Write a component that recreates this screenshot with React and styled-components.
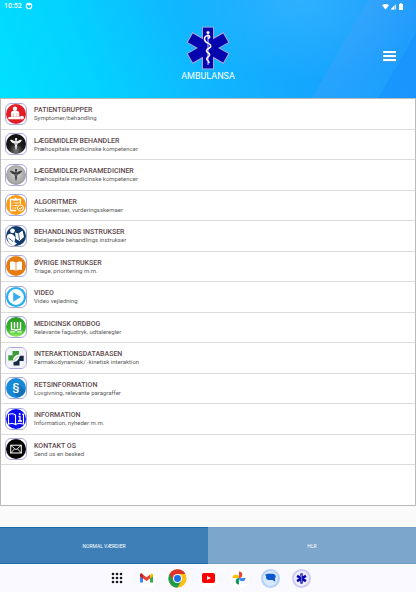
import React from 'react'
import styled, { createGlobalStyle } from 'styled-components'

const GlobalStyle = createGlobalStyle`
  * {
    box-sizing: border-box;
  }
  body {
    margin: 0;
    background: #fafafa;
    font-family: Roboto, "Liberation Sans", sans-serif;
  }
`

const Page = styled.div`
  display: flex;
  flex-direction: column;
  min-height: 100vh;
`

const Header = styled.header`
  display: flex;
  flex-direction: column;
  padding-bottom: 16px;
  background:
    linear-gradient(120deg, transparent 78%, rgba(80, 160, 250, 0.3) 78%, rgba(60, 160, 255, 0.1) 92%, rgba(24, 130, 255, 0.3) 92%),
    radial-gradient(ellipse 120px 80px at 72% 0, rgba(70, 190, 255, 0.5), transparent),
    linear-gradient(68deg, #00e0ff 0%, #04d0ff 24%, #10b6ff 47%, #14a8ff 65%, #1e9afc 100%);
`

const StatusBar = styled.div`
  display: flex;
  align-items: center;
  gap: 3px;
  height: 12px;
  padding: 0 12px 0 4px;
  color: #fff;
  font-size: 7px;
  font-weight: 500;
  line-height: 8px;
`

const StatusIcons = styled.span`
  display: flex;
  gap: 1px;
  margin-left: auto;
`

const TitleBar = styled.div`
  display: grid;
  grid-template-columns: 1fr auto 1fr;
  align-items: center;
  padding: 14px 20px 0;
`

const Brand = styled.h1`
  display: flex;
  flex-direction: column;
  align-items: center;
  grid-column: 2;
  margin: 0;
  color: #fff;
  font-size: 9px;
  font-weight: 400;
  line-height: 12px;
`

const MenuBtn = styled.button`
  display: flex;
  justify-self: end;
  padding: 4px 0 0;
  border: 0;
  background: none;
  cursor: pointer;
`

const Panel = styled.ul`
  display: grid;
  flex: 1;
  grid-template-rows: repeat(12, 1fr) 40px;
  margin: 0 0 21px;
  padding: 0;
  border: 1px solid #bbb;
  background: #fff;
  list-style: none;
`

const Item = styled.li`
  display: flex;
  border-bottom: 1px solid #dcdcdc;
`

const ItemLink = styled.a`
  display: flex;
  flex: 1;
  align-items: center;
  gap: 7px;
  padding: 0 4px;
  color: #5d4a4c;
  text-decoration: none;
`

const ItemBody = styled.span`
  display: flex;
  flex-direction: column;
  padding-top: 1px;
`

const ItemTitle = styled.span`
  font-size: 7px;
  font-weight: 500;
  line-height: 7px;
`

const ItemText = styled.span`
  color: #5c5c5c;
  font-size: 6px;
  line-height: 7px;
`

const Tabs = styled.div`
  display: flex;
`

const Tab = styled.button`
  flex: 1;
  height: 37px;
  padding: 0;
  border: 0;
  border-top: 1px solid ${props => props.$edge};
  border-bottom: 1px solid ${props => props.$edge};
  background: ${props => props.$color};
  color: #fff;
  font-family: inherit;
  font-size: 5px;
  line-height: 6px;
  cursor: pointer;
`

const Dock = styled.nav`
  display: flex;
  align-items: center;
  justify-content: center;
  gap: 12px;
  height: 28px;
  padding-left: 4px;
  background: #faf9ff;
`

const DockBtn = styled.button`
  display: flex;
  align-items: center;
  justify-content: center;
  width: ${props => props.$width || '19px'};
  height: 19px;
  padding: 0;
  border: ${props => (props.$ring ? `2px solid ${props.$ring}` : '0')};
  border-radius: 50%;
  background: ${props => props.$fill || 'transparent'};
  cursor: pointer;
`

const StarOfLife = ({ size, outline }) => (
  <svg width={size} height={size} viewBox="-22 -22 44 44" aria-hidden="true">
    {outline && [0, 60, 120].map(a => (
      <rect key={a} x="-5.2" y="-20.6" width="10.4" height="41.2" transform={`rotate(${a})`} fill="none" stroke="#a7a6dc" strokeWidth="1.6" />
    ))}
    {[0, 60, 120].map(a => (
      <rect key={a} x="-5" y="-20.4" width="10" height="40.8" transform={`rotate(${a})`} fill="#0505ae" />
    ))}
    <path d="M0 -15V17" stroke="#c9cbee" strokeWidth="1" />
    <circle cx="0" cy="-15.500" r="1.500" fill="#fff" />
    <path d="M-2.500 -6.500C-4.500 -9 -3.500 -12.500 0 -12.500C2.500 -12.300 2 -10.500 0.500 -9.800M-2.500 -6.500C-1 -4.500 2.500 -5 2.800 -2C3 0.500 -1.500 0 -1.500 2.800C-1.500 5 1.800 4.500 1.600 7C1.300 9 -1.300 8.800 -1.300 11C-1.300 12.500 0.500 12.500 1 14.500" fill="none" stroke="#fff" strokeWidth="1.500" strokeLinecap="round" />
  </svg>
)

const Disc = ({ color }) => <circle cx="11" cy="11" r="10" fill={color} />

const caduceus = color => (
  <g fill="none" stroke={color} strokeLinecap="round">
    <path d="M11 6V16" strokeWidth="1.2" />
    <path d="M10.500 8.500C8.500 8.500 8 7 5.500 7C6 9 8 10.500 10.500 10M11.500 8.500C13.500 8.500 14 7 16.500 7C16 9 14 10.500 11.500 10" fill={color} strokeWidth="0.6" />
    <path d="M9.500 10.500C8.500 12 13 12.500 12 14M12.500 10.500C13.500 12 9 12.500 10 14" strokeWidth="0.8" />
    <circle cx="11" cy="6" r="0.6" fill={color} />
  </g>
)

const drawings = {
  patient: (
    <>
      <Disc color="#e11c24" />
      <circle cx="10" cy="5.800" r="2.200" fill="#fff" />
      <path d="M6 13.500V10.200C6 8.500 7 8 8.200 8H12C13.500 8 14.200 8.700 14.200 10.200V13.500Z" fill="#fff" />
      <path d="M2.500 15C5 13.500 8 13.300 15.500 13.600V16.200H4Z" fill="#fff" />
      <circle cx="17" cy="14.600" r="1.900" fill="#fff" />
      <path d="M8.300 10.500V13M11.900 10.500V13" stroke="#e98a8d" strokeWidth="0.6" />
    </>
  ),
  doctor: (
    <>
      <Disc color="url(#black)" />
      {caduceus('#fff')}
    </>
  ),
  medic: (
    <>
      <Disc color="url(#silver)" />
      {caduceus('#333')}
    </>
  ),
  algorithm: (
    <>
      <Disc color="#fb9a13" />
      <path d="M8 5.500H5.500V16.500H11M13 5.500H15.300V10" fill="none" stroke="#fff" strokeWidth="1.300" />
      <path d="M8 6.800V4.800H9.300A1.200 1.200 0 0 1 11.700 4.800H13V6.800Z" fill="#fff" />
      <path d="M7.500 9H8.500M9.500 9H13.500M7.500 11.500H8.500M9.500 11.500H12.500M7.500 14H8.500M9.500 14H11.500" stroke="#fff" />
      <circle cx="15.500" cy="14" r="3" fill="#fb9a13" stroke="#fff" />
      <path d="M14 14L15.200 15.200L17 13" fill="none" stroke="#fff" />
    </>
  ),
  instructions: (
    <>
      <Disc color="#113a6c" />
      <circle cx="7.500" cy="5.800" r="2.400" fill="#fff" />
      <path d="M2 11C3 8.500 6 8.300 8 9.700L10.500 12.500L9.500 17L12 18.500L9 20.500C5 20 2 16 2 11Z" fill="#fff" />
      <path d="M10 7.500L13.500 8.500L17.500 5.500L19 12L14.500 16L11 14Z" fill="#fff" />
      <path d="M13.500 8.500L14.500 15M3.500 13L8 16.500" stroke="#113a6c" strokeWidth="0.800" />
    </>
  ),
  book: (
    <>
      <Disc color="#e57c12" />
      <path d="M10.600 7.500C9 6.200 7 6.200 5 6.800V15.200C7 14.600 9 14.700 10.600 15.800ZM11.400 7.500C13 6.200 15 6.200 17 6.800V15.200C15 14.600 13 14.700 11.400 15.800Z" fill="#fff" />
    </>
  ),
  video: (
    <>
      <circle cx="11" cy="11" r="9" fill="#fff" stroke="#25aff5" strokeWidth="2.200" />
      <path d="M8.200 6.200L16 11L8.200 15.800Z" fill="#35adee" />
    </>
  ),
  dictionary: (
    <>
      <Disc color="url(#green)" />
      <path d="M6.500 6V13.500H9.800L11 14.500L12.200 13.500H15.500V6M9.500 6V12M12.500 6V12" fill="none" stroke="#fff" strokeWidth="1.400" />
      <path d="M5.500 15.800H9.800M12.200 15.800H16.500" stroke="#e5ffd9" strokeWidth="1.200" />
    </>
  ),
  interaction: (
    <>
      <rect x="1" y="1" width="20" height="20" rx="5" fill="#f2f3f7" />
      <path d="M7.500 4H14V7.500C10.500 7.500 8.500 9.500 7.800 13.500H3.300V8.300H7.500Z" fill="#3c9c3a" />
      <path d="M14.500 18.500H8.500V15C12 15 14 12.500 14.700 8.800H18.700V14H14.500Z" fill="#152b42" />
      <path d="M8 14.500C8.300 10.500 10.500 8 14.500 8C14 12 12 14.500 8 14.500Z" fill="#fff" />
      <path d="M8.500 14L13.500 9" stroke="#7dbb70" strokeWidth="0.800" />
    </>
  ),
  law: (
    <>
      <Disc color="#1689d8" />
      <path d="M12 6L20.500 13.500A10 10 0 0 1 12 20.500L8.500 15.500Z" fill="#1273bb" />
      <text x="11" y="14" textAnchor="middle" fill="#fff" fontSize="11" fontWeight="500">§</text>
    </>
  ),
  info: (
    <>
      <Disc color="#0b0bf4" />
      <path d="M10.500 7C8.500 5.500 6 5.500 3.500 6.200V16C6 15.300 8.500 15.300 10.500 16.500V7M10.500 16.500C12.500 15.300 15.500 15.300 18.500 16V6.200H17" fill="none" stroke="#fff" strokeWidth="1.100" />
      <path d="M13.500 8.500H15V13M13 13H17" fill="none" stroke="#fff" strokeWidth="1.300" />
      <circle cx="14.700" cy="6" r="1" fill="#fff" />
    </>
  ),
  mail: (
    <>
      <Disc color="#050505" />
      <rect x="5.700" y="7.200" width="10.600" height="7.800" fill="none" stroke="#fff" />
      <path d="M6 7.500L11 11.800L16 7.500M6 14.800L9.500 10.800M16 14.800L12.500 10.800" fill="none" stroke="#fff" strokeWidth="0.900" />
    </>
  ),
}

const RowIcon = ({ name }) => (
  <svg width="22" height="22" viewBox="0 0 22 22" aria-hidden="true">
    <defs>
      <radialGradient id="black" cx="50%" cy="85%" r="75%">
        <stop offset="0" stopColor="#777" />
        <stop offset="0.5" stopColor="#1c1c1c" />
        <stop offset="1" stopColor="#111" />
      </radialGradient>
      <radialGradient id="silver" cx="50%" cy="45%" r="60%">
        <stop offset="0" stopColor="#d8d8d8" />
        <stop offset="1" stopColor="#949494" />
      </radialGradient>
      <linearGradient id="green" x1="0" y1="0" x2="0" y2="1">
        <stop offset="0" stopColor="#2e9a2b" />
        <stop offset="0.6" stopColor="#35b52a" />
        <stop offset="1" stopColor="#9af06a" />
      </linearGradient>
    </defs>
    <rect x="0.500" y="0.500" width="21" height="21" rx="5.500" fill="#fff" stroke="#a9a8dd" />
    {drawings[name]}
  </svg>
)

const items = [
  { icon: 'patient', title: 'PATIENTGRUPPER', text: 'Symptomer/behandling' },
  { icon: 'doctor', title: 'LÆGEMIDLER BEHANDLER', text: 'Præhospitale medicinske kompetencer' },
  { icon: 'medic', title: 'LÆGEMIDLER PARAMEDICINER', text: 'Præhospitale medicinske kompetencer' },
  { icon: 'algorithm', title: 'ALGORITMER', text: 'Huskeremser, vurderingsskemaer' },
  { icon: 'instructions', title: 'BEHANDLINGS INSTRUKSER', text: 'Detaljerede behandlings instrukser' },
  { icon: 'book', title: 'ØVRIGE INSTRUKSER', text: 'Triage, prioritering m.m.' },
  { icon: 'video', title: 'VIDEO', text: 'Video vejledning' },
  { icon: 'dictionary', title: 'MEDICINSK ORDBOG', text: 'Relevante fagudtryk, udtaleregler' },
  { icon: 'interaction', title: 'INTERAKTIONSDATABASEN', text: 'Farmakodynamisk/ -kinetisk interaktion' },
  { icon: 'law', title: 'RETSINFORMATION', text: 'Lovgivning, relevante paragraffer' },
  { icon: 'info', title: 'INFORMATION', text: 'Information, nyheder m.m.' },
  { icon: 'mail', title: 'KONTAKT OS', text: 'Send os en besked' },
]

const Status = () => (
  <StatusBar>
    <span>10:52</span>
    <svg width="8" height="8" viewBox="0 0 8 8" aria-hidden="true">
      <circle cx="4" cy="4" r="2.700" fill="none" stroke="#fff" strokeWidth="1.100" />
      <path d="M1.800 1.500H6.200L5.500 3.200H2.500Z" fill="#fff" />
    </svg>
    <StatusIcons>
      <svg width="7" height="7" viewBox="0 0 7 7" aria-hidden="true">
        <path d="M0 2.300C2 0.500 5 0.500 7 2.300L3.500 6.500Z" fill="#fff" />
      </svg>
      <svg width="7" height="7" viewBox="0 0 7 7" aria-hidden="true">
        <path d="M6 1V6.500H0.500Z" fill="#fff" fillOpacity="0.500" />
        <path d="M4 3V6.500H0.500ZM5.300 2H6V6.500H5.300Z" fill="#fff" />
      </svg>
      <svg width="6" height="7" viewBox="0 0 6 7" aria-hidden="true">
        <path d="M2 0.300H4V1H5V7H1V1H2Z" fill="#fff" />
      </svg>
    </StatusIcons>
  </StatusBar>
)

const List = () => (
  <Panel>
    {items.map(item => (
      <Item key={item.icon}>
        <ItemLink href={'#' + item.icon}>
          <RowIcon name={item.icon} />
          <ItemBody>
            <ItemTitle>{item.title}</ItemTitle>
            <ItemText>{item.text}</ItemText>
          </ItemBody>
        </ItemLink>
      </Item>
    ))}
  </Panel>
)

const AppDock = () => (
  <Dock aria-label="Apps">
    <DockBtn $width="15px" aria-label="All apps">
      <svg width="12" height="12" viewBox="0 0 12 12">
        {[2, 6, 10].map(y => [2, 6, 10].map(x => (
          <circle key={x + '-' + y} cx={x} cy={y} r="1.300" fill="#18181c" />
        )))}
      </svg>
    </DockBtn>
    <DockBtn $fill="#fff" aria-label="Gmail">
      <svg width="13" height="10" viewBox="0 0 13 10">
        <path d="M0 2V9.500H3V4.500Z" fill="#4285f4" />
        <path d="M13 2V9.500H10V4.500Z" fill="#34a853" />
        <path d="M10 2.200L11.300 0.800C12 0.300 13 0.800 13 1.800V3.200L10 5.500Z" fill="#fbbc04" />
        <path d="M0 3.200V1.800C0 0.800 1 0.300 1.800 0.800L6.500 4.300L10 1.700V5.500L6.500 8L3 5.500Z" fill="#ea4335" />
        <path d="M0 3.200V1.800C0 0.800 1 0.300 1.800 0.800L3 1.700V5.500Z" fill="#c5221f" />
      </svg>
    </DockBtn>
    <DockBtn aria-label="Chrome">
      <svg width="19" height="19" viewBox="0 0 48 48">
        <circle cx="24" cy="24" r="23" fill="#fbc116" />
        <path d="M24 24L4.100 12.500A23 23 0 0 0 24 47L34 29.500Z" fill="#1e9b4b" />
        <path d="M4.100 12.500A23 23 0 0 1 44 12.500H24L14 30Z" fill="#dd3428" />
        <circle cx="24" cy="24" r="11.500" fill="#fff" />
        <circle cx="24" cy="24" r="8.800" fill="#1a6fe8" />
      </svg>
    </DockBtn>
    <DockBtn $fill="#fff" aria-label="YouTube">
      <svg width="13" height="10" viewBox="0 0 13 10">
        <rect width="13" height="10" rx="2" fill="#f00" />
        <path d="M5 3L9 5L5 7Z" fill="#fff" />
      </svg>
    </DockBtn>
    <DockBtn $fill="#fff" aria-label="Photos">
      <svg width="14" height="14" viewBox="0 0 14 14">
        <path d="M7 7V0.500A3.200 3.200 0 0 1 7 7Z" fill="#ea4335" />
        <path d="M7 7H13.500A3.200 3.200 0 0 1 7 7Z" fill="#4285f4" />
        <path d="M7 7V13.500A3.200 3.200 0 0 1 7 7Z" fill="#0f9d58" />
        <path d="M7 7H0.500A3.200 3.200 0 0 1 7 7Z" fill="#fbbc04" />
      </svg>
    </DockBtn>
    <DockBtn $fill="#d8e8fb" $ring="#b4d1f8" aria-label="Messages">
      <svg width="11" height="10" viewBox="0 0 11 10">
        <path d="M3 0.800H8A2.700 2.700 0 0 1 9.800 5.500L10.300 8.800L7.500 7H3.500A2.800 2.800 0 0 1 1.200 3.500L0.200 1.500Z" fill="#0b57d0" />
      </svg>
    </DockBtn>
    <DockBtn $fill="#eeeefc" $ring="#cdcbf5" aria-label="Ambulansa">
      <StarOfLife size="11" />
    </DockBtn>
  </Dock>
)

const App = () => (
  <Page>
    <GlobalStyle />
    <Header>
      <Status />
      <TitleBar>
        <Brand>
          <StarOfLife size="44" outline />
          AMBULANSA
        </Brand>
        <MenuBtn aria-label="Menu">
          <svg width="13" height="11" viewBox="0 0 13 11">
            <path d="M0 2H13M0 6H13M0 10H13" stroke="#6f9fc4" />
            <path d="M0 1H13M0 5H13M0 9H13" stroke="#fff" strokeWidth="2" />
          </svg>
        </MenuBtn>
      </TitleBar>
    </Header>
    <List />
    <Tabs>
      <Tab $color="#3e7fb7" $edge="#1f6ba6">NORMAL VÆRDIER</Tab>
      <Tab $color="#7ca6cb" $edge="#759fc3">HLR</Tab>
    </Tabs>
    <AppDock />
  </Page>
)

export default App
